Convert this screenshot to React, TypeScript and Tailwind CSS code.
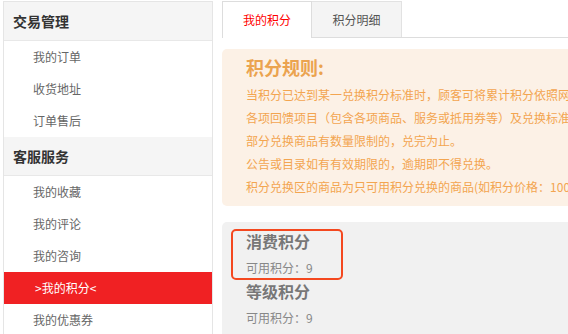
import React from "react";

const font = { fontFamily: '"Noto Sans CJK SC", "Noto Sans", sans-serif' };

function Header({ children }: { children: React.ReactNode }) {
  return (
    <div className="h-[39px] bg-[#f5f5f5] border-b border-[#e8e8e8] pl-[9px] flex items-center text-[14px] font-bold text-[#333]">
      {children}
    </div>
  );
}

function Item({ children }: { children: React.ReactNode }) {
  return (
    <div className="h-8 pl-[29px] flex items-center text-[12px] text-[#666]">{children}</div>
  );
}

export default function App() {
  const rules = [
    "当积分已达到某一兑换积分标准时，顾客可将累计积分依照网站公布的积分兑换标准兑换相应的",
    "各项回馈项目（包含各项商品、服务或抵用券等）及兑换标准，以网站公布为准。",
    "部分兑换商品有数量限制的，兑完为止。",
    "公告或目录如有有效期限的，逾期即不得兑换。",
    "积分兑换区的商品为只可用积分兑换的商品(如积分价格：100积分)。",
  ];
  return (
    <div className="relative flex w-[568px] h-[334px] overflow-hidden bg-white" style={font}>
      <div className="ml-[3px] mt-px w-[210px] shrink-0 border border-[#e5e5e5] h-[360px] bg-white">
        <Header>交易管理</Header>
        <Item>我的订单</Item>
        <Item>收货地址</Item>
        <Item>订单售后</Item>
        <Header>客服服务</Header>
        <Item>我的收藏</Item>
        <Item>我的评论</Item>
        <Item>我的咨询</Item>
        <div className="h-8 pl-[31px] flex items-center text-[12px] text-white bg-[#f02123]">
          &gt;我的积分&lt;
        </div>
        <Item>我的优惠券</Item>
      </div>

      <div className="ml-[9px] w-[760px] shrink-0">
        <div className="mt-px flex h-[37px] border-b border-[#dddddd]">
          <div className="relative -mb-px h-[37px] w-[90px] border border-b-0 border-[#dddddd] bg-white flex items-center justify-center text-[12px] text-[#ff0000]">
            我的积分
          </div>
          <div className="h-[36px] w-[90px] border-t border-r border-[#e2e2e2] bg-[#f4f4f4] flex items-center justify-center text-[12px] text-[#555]">
            积分明细
          </div>
        </div>

        <div className="mt-[11px] rounded-[5px] bg-[#fcf1e6] pl-[24px] pt-[6px] pb-[8px]">
          <div className="h-[25px] leading-[25px] text-[18px] font-bold text-[#eba34f]">积分规则:</div>
          <div className="mt-[3px]">
            {rules.map((r) => (
              <div key={r} className="h-[23px] leading-[23px] text-[12px] text-[#f3a550] whitespace-nowrap">
                {r}
              </div>
            ))}
          </div>
        </div>

        <div className="mt-[16px] rounded-[5px] bg-[#f1f1f1] pl-[24px] pt-[7px] h-[200px]">
          <div className="h-6 leading-6 text-[16px] font-bold text-[#777]">消费积分</div>
          <div className="mt-[5px] h-5 leading-5 text-[12px] text-[#888]">可用积分：9</div>
          <div className="mt-px h-6 leading-6 text-[16px] font-bold text-[#777]">等级积分</div>
          <div className="mt-[5px] h-5 leading-5 text-[12px] text-[#888]">可用积分：9</div>
        </div>
      </div>

      <div className="absolute left-[231px] top-[229px] w-[112px] h-[51px] border-2 border-[#f4481f] rounded-[5px]" />
    </div>
  );
}
